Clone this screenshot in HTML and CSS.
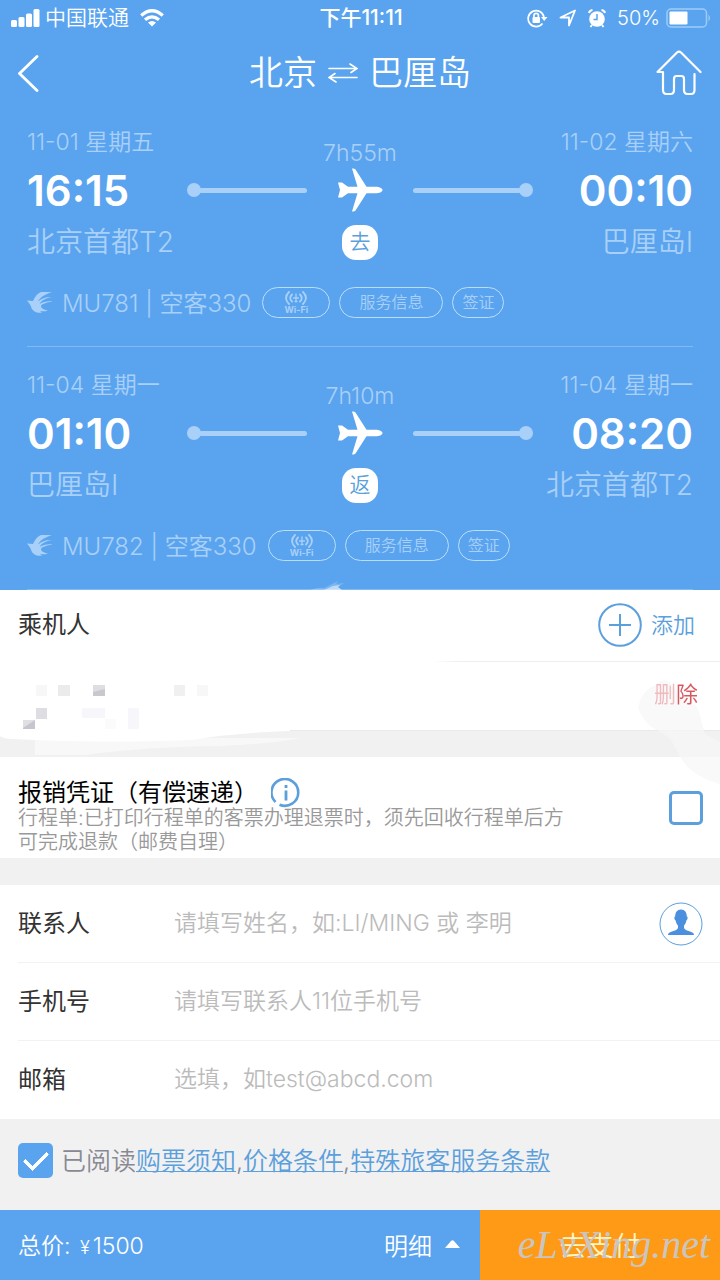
FILE: index.html
```html
<!DOCTYPE html>
<html lang="zh-CN">
<head>
<meta charset="utf-8">
<meta name="viewport" content="width=device-width, initial-scale=1">
<title>北京 ⇄ 巴厘岛</title>
<link rel="stylesheet" href="styles.css">
</head>
<body>
<svg class="symbols" aria-hidden="true">
  <symbol id="plane" viewBox="0 0 46 44"><path d="M45.500 22c0-2-3.500-3.300-7-3.300h-9L18.500 1.500Q17.300.1 15 .6L20.500 18.700H11L5 14.500H1L3 22 1 29.500h4l6-4.200h9.500L15 43.400q2.300.5 3.500-.9L29.500 25.300h9c3.500 0 7-1.300 7-3.300z" fill="#fff"/></symbol>
  <symbol id="swallow" viewBox="0 0 26 22"><path d="M0 9.500l6 .5C8 5 11 2 14 1h11C19 3 13 6 11 10.500 15 7 20 5.500 24.500 6 18 7.500 14 10 12.500 13c4-2.500 8.500-3.300 13-2.500-6 1-11 2.500-11.500 4.500C14 17.500 18 19 21 19.500c-3 1-6 1-8 .5l2 1.700C10 22.500 5 20 4 15.500 3 13 1.500 11.500 0 9.500z" fill="#a9d0f8"/></symbol>
  <symbol id="wifi-plane" viewBox="0 0 26 14"><g fill="none" stroke="#a9d0f8" stroke-width="1.800" stroke-linecap="round"><path d="M6 1Q0 7 6 13M9 3.500Q5.500 7 9 10.500M20 1q6 6 0 12M17 3.500q3.500 3.500 0 7"/><path d="M13 3v7M10.500 7h5M12 10.500h2" stroke-width="1.300"/></g></symbol>
</svg>

<header class="top">
  <div class="status">
    <div class="status-side">
      <svg width="29" height="18" viewBox="0 0 29 18" fill="#fff"><rect x="0" y="11" width="6" height="7" rx="1.500"/><rect x="7.500" y="8" width="6" height="10" rx="1.500"/><rect x="15" y="4.500" width="6" height="13.500" rx="1.500"/><rect x="22.500" y="0" width="6" height="18" rx="1.500"/></svg>
      <span class="carrier">中国联通</span>
      <svg class="wifi" width="24" height="18" viewBox="0 0 24 18" fill="none" stroke="#fff" stroke-width="3.200"><path d="M1.200 6.500Q12-3 22.800 6.500M5 10.800Q12 4.800 19 10.800"/><path d="M8 13.500Q12 10.500 16 13.500L12 17.500z" fill="#fff" stroke="none"/></svg>
    </div>
    <span class="clock">下午11:11</span>
    <div class="status-side status-right">
      <svg width="21" height="19" viewBox="0 0 21 19" fill="none" stroke="#fff" stroke-width="1.700"><path d="M15.500 14.500A8 8 0 1 1 17 8"/><path d="M14 8h6.500L17.200 12z" fill="#fff" stroke="none"/><rect x="5.500" y="8" width="7.500" height="6" rx="1" fill="#fff" stroke="none"/><path d="M7 8V6.500a2.200 2.200 0 0 1 4.400 0V8"/></svg>
      <svg width="18" height="18" viewBox="0 0 18 18" fill="none" stroke="#fff" stroke-width="1.800" stroke-linejoin="round"><path d="M1.500 8.500 16 1.500 10 16.500V8.500z"/></svg>
      <svg width="18" height="19" viewBox="0 0 18 19"><circle cx="9" cy="10" r="7.800" fill="#fff"/><path d="M9 5v5.500H5.500" fill="none" stroke="#5aa4ef" stroke-width="1.500"/><path d="M1 4Q1.500 1.500 4.500 1M17 4Q16.500 1.500 13.500 1M4 16l-1.500 2M14 16l1.500 2" fill="none" stroke="#fff" stroke-width="2"/></svg>
      <span class="charge">50%</span>
      <svg class="battery" width="45" height="20" viewBox="0 0 45 20"><rect x="1" y="1" width="39.500" height="18" rx="4" fill="none" stroke="#9dcbf6" stroke-width="1.500"/><rect x="3.500" y="3.500" width="18" height="13" rx="1" fill="#fff"/><path d="M42.500 6.500q3 3.500 0 7z" fill="#9dcbf6"/></svg>
    </div>
  </div>
  <nav class="navbar">
    <button class="icon-button" aria-label="返回"><svg width="21" height="37" viewBox="0 0 21 37" fill="none" stroke="#fff" stroke-width="2.800" stroke-linecap="round"><path d="M19 1.500 1.500 18.500 19 35.500"/></svg></button>
    <h1 class="route">北京<svg width="30" height="20" viewBox="0 0 30 20" fill="none" stroke="#fff" stroke-width="1.600" stroke-linecap="round"><path d="M1 5.500h28M22 1l7 4.500-6 4M29 14.500H1M8 19l-7-4.500 6-4"/></svg>巴厘岛</h1>
    <button class="icon-button" aria-label="首页"><svg width="46" height="46" viewBox="0 0 46 46" fill="none" stroke="#fff" stroke-width="2.200" stroke-linecap="round" stroke-linejoin="round"><path d="M7 22H1.500L21 2.500q2-2 4 0L44.500 22M7 22v18q0 4 3.500 4h4q3.500 0 3.500-4V29q0-3 2.500-3h5q2.500 0 2.500 3v11q0 4 3.500 4h3.500q3.500 0 3.500-4V24"/></svg></button>
  </nav>
</header>

<main>
  <section class="flight">
    <div class="legs">
      <div class="stop"><span class="date">11-01 星期五</span><strong class="time">16:15</strong><span class="place">北京首都T2</span></div>
      <div class="middle"><span class="duration">7h55m</span>
        <div class="track"><i class="dot"></i><i class="line"></i><svg width="46" height="44"><use href="#plane"/></svg><i class="line"></i><i class="dot"></i></div>
        <div class="direction"><span>去</span></div></div>
      <div class="stop arrive"><span class="date">11-02 星期六</span><strong class="time">00:10</strong><span class="place">巴厘岛I</span></div>
    </div>
    <div class="info">
      <svg width="26" height="22"><use href="#swallow"/></svg><span class="plane-type">MU781 | 空客330</span>
      <button class="chip wifi-chip"><svg width="26" height="14"><use href="#wifi-plane"/></svg><span>Wi-Fi</span></button>
      <button class="chip service">服务信息</button><button class="chip visa">签证</button>
    </div>
  </section>
  <section class="flight">
    <div class="legs">
      <div class="stop"><span class="date">11-04 星期一</span><strong class="time">01:10</strong><span class="place">巴厘岛I</span></div>
      <div class="middle"><span class="duration">7h10m</span>
        <div class="track"><i class="dot"></i><i class="line"></i><svg width="46" height="44"><use href="#plane"/></svg><i class="line"></i><i class="dot"></i></div>
        <div class="direction"><span>返</span></div></div>
      <div class="stop arrive"><span class="date">11-04 星期一</span><strong class="time">08:20</strong><span class="place">北京首都T2</span></div>
    </div>
    <div class="info">
      <svg width="26" height="22"><use href="#swallow"/></svg><span class="plane-type">MU782 | 空客330</span>
      <button class="chip wifi-chip"><svg width="26" height="14"><use href="#wifi-plane"/></svg><span>Wi-Fi</span></button>
      <button class="chip service">服务信息</button><button class="chip visa">签证</button>
    </div>
    <svg class="spray" width="60" height="14" viewBox="0 0 60 14" fill="#fff"><path d="M2 14q8-3 14-2l8-4 6-3-2 3 8-1-6 4 4 3z" opacity=".2"/><path d="M16 14l9-4 7-1-2 2 4 3z" opacity=".5"/></svg>
  </section>

  <section class="card passengers">
    <div class="row passenger-head"><h2 class="label">乘机人</h2>
      <button class="add"><svg width="44" height="44" viewBox="0 0 44 44" fill="none" stroke="#5b9fdc" stroke-width="2"><circle cx="22" cy="22" r="20.800"/><path d="M22 11v22M11 22h22"/></svg>添加</button></div>
    <div class="row passenger-item">
      <svg class="mosaic" width="190" height="50" viewBox="0 0 190 50" aria-hidden="true"><g fill="#dedee2"><path d="M18 2h11v11H18z" opacity=".25"/><path d="M40 2h12v11H40z" opacity=".6"/><path d="M75 2h12v11H75zM18 25h11v11H18z"/><path d="M156 2h11v11h-11z" opacity=".45"/><path d="M179 2h11v11h-11z" opacity=".25"/></g><path d="M75 9l12-3v7H75z" fill="#c8c8cf"/><path d="M5 37h12v11H5z" fill="#c6c6cf"/><path d="M5 37h12L5 45z" fill="#dfdfe4"/><path d="M64 25h23v10H64zM110 25h11v22h-11z" fill="#f6f6fb"/><path d="M87 36h11v11H87z" fill="#fbfbfd"/></svg>
      <button class="delete">删除</button>
    </div>
    <svg class="erased" width="300" height="30" viewBox="0 0 300 30" aria-hidden="true"><path d="M35 9h265q-30 6-80 8-80 1-135 9H35z" fill="#f8f8f8"/><path d="M0 0h290v2q-60 2-98 9-90 4-180-1Q4 10 0 7z" fill="#fff"/></svg>
    <svg class="smudge" width="82" height="112" viewBox="0 0 82 112" aria-hidden="true"><path d="M0 36Q4 18 16 14 28 2 34 14L60 36l7 26 15 8v42Q54 104 44 88L32 66 12 54Q4 46 0 36z" fill="#f7f7f7" opacity=".7"/></svg>
  </section>

  <section class="card voucher">
    <div class="voucher-text">
      <div class="voucher-head"><h2 class="label black"><label for="voucher">报销凭证（有偿速递）</label></h2>
        <button class="icon-button" aria-label="报销凭证说明"><svg width="30" height="30" viewBox="0 0 30 30" fill="none" stroke="#5b9fdc" stroke-width="2.600"><path d="M4.500 24A13.400 13.400 0 1 1 8.500 26.700"/><path d="M15 12.500v10M15 7v3" stroke-width="2.800"/></svg></button></div>
      <p class="note">行程单:已打印行程单的客票办理退票时，须先回收行程单后方<br>可完成退款（邮费自理）</p>
    </div>
    <input class="box" id="voucher" type="checkbox">
  </section>

  <section class="card contact">
    <div class="row field"><label class="label" for="name">联系人</label><input id="name" type="text" placeholder="请填写姓名，如:LI/MING 或 李明">
      <button class="icon-button" aria-label="选择联系人"><svg width="44" height="44" viewBox="0 0 44 44"><circle cx="22" cy="22" r="21" fill="none" stroke="#5b9fdc"/><path d="M22 7.500c4 0 5.800 3 5.800 7 1.500 0 .8 3.500-.5 4-.3 2.500-1.300 4-2.300 5v2.500c1 2 3 2.500 6 3.500 3 1 4 2 4 3.500H9c0-1.500 1-2.500 4-3.500 3-1 5-1.500 6-3.500v-2.500c-1-1-2-2.500-2.300-5-1.300-.5-2-4-.5-4 0-4 1.800-7 5.800-7z" fill="#4b8fdf"/></svg></button></div>
    <div class="row field"><label class="label" for="phone">手机号</label><input id="phone" type="tel" placeholder="请填写联系人11位手机号"></div>
    <div class="row field"><label class="label" for="email">邮箱</label><input id="email" type="email" placeholder="选填，如test@abcd.com"></div>
  </section>

  <div class="terms"><input class="agree" id="agree" type="checkbox" checked><div class="terms-text"><label for="agree">已阅读</label><a href="#">购票须知</a>,<a href="#">价格条件</a>,<a href="#">特殊旅客服务条款</a></div></div>
</main>

<footer class="paybar">
  <div class="total"><span>总价: <small>¥</small><span class="price">1500</span></span><button class="detail">明细<svg width="15" height="8" viewBox="0 0 15 8"><path d="M0 8 6 1q1.500-1.500 3 0l6 7z" fill="#fff"/></svg></button></div>
  <button class="pay">去支付</button>
  <span class="watermark">eLvXing.net</span>
</footer>
</body>
</html>
```
FILE: styles.css
```css
* { box-sizing: border-box; }
body { margin: 0; background: #f1f1f1; color: #333; font-family: Inter, "Noto Sans CJK SC", sans-serif; font-size: 24px; font-weight: 350; }
button, input { font: inherit; color: inherit; margin: 0; padding: 0; border: 0; background: none; }
h1, h2, p { margin: 0; font-weight: inherit; }
svg { display: block; flex: none; }
.symbols { position: absolute; width: 0; height: 0; }

.top, .flight { background: #5aa4ef; color: #fff; }
.status { display: flex; align-items: center; height: 36px; padding: 0 9px 0 11px; font-size: 21px; line-height: 36px; }
.status-side { display: flex; flex: 1; align-items: center; gap: 5px; }
.status-right { justify-content: flex-end; gap: 11px; }
.clock { font-weight: 500; font-size: 21px; }
.wifi { margin-left: 6px; }
.battery { margin-left: -5px; }
.charge { font-size: 20px; }
.navbar { display: flex; align-items: center; justify-content: space-between; height: 68px; padding: 6px 18px 0; }
.navbar .icon-button { display: flex; width: 46px; }
.route { display: flex; align-items: center; gap: 11px; font-size: 34px; line-height: 50px; }

.flight { position: relative; padding: 18px 27px 0; }
.flight::after { content: ""; display: block; height: 1px; background: #82bbf4; }
.legs { display: grid; grid-template-columns: 160px 1fr 160px; color: #a9d0f8; }
.stop, .middle { display: grid; grid-template-rows: 40px 56px 48px; align-items: center; white-space: nowrap; }
.arrive { text-align: right; justify-items: end; }
.date, .duration { font-size: 23px; }
.date { line-height: 42px; }
.time { color: #fff; font-size: 42px; font-weight: 600; }
.place { font-size: 28px; line-height: 50px; }
.duration { align-self: end; justify-self: center; line-height: 18px; }
.track { display: flex; align-items: center; }
.dot { flex: none; width: 14px; height: 14px; border-radius: 50%; background: #a9d0f8; }
.line { flex: 1; height: 5px; border-radius: 3px; background: #a9d0f8; margin: 0 30px 0 -2px; }
.track svg + .line { margin: 0 -2px 0 30px; }
.direction { display: flex; justify-content: center; }
.direction span { width: 36px; height: 35px; border-radius: 14px; background: #fff; color: #5b9fdc; font-size: 21px; line-height: 34px; text-align: center; }
.info { display: flex; align-items: center; height: 80px; padding: 20px 0 28px; color: #a9d0f8; }
.plane-type { margin: -2px 11px 0 9px; white-space: nowrap; }
.chip { height: 31px; margin-right: 9px; border: 1px solid #b9defa; border-radius: 16px; font-size: 16px; line-height: 29px; }
.wifi-chip { display: flex; flex-direction: column; align-items: center; justify-content: center; width: 68px; font-size: 9px; font-weight: 700; line-height: 9px; }
.service { width: 104px; }
.visa { width: 52px; }
.spray { position: absolute; left: 308px; bottom: 0; }

.card { background: #fff; }
.row { display: flex; align-items: center; }
.label { font-size: 24px; font-weight: 400; line-height: 36px; }
.black { color: #000; }
.passengers { position: relative; height: 141px; margin-bottom: 26px; border-bottom: 1px solid #e9e9e9; }
.passenger-head { justify-content: space-between; height: 71px; padding: 0 25px 2px 18px; }
.add { display: flex; align-items: center; gap: 9px; color: #5b9fdc; font-size: 22px; line-height: 40px; }
.passenger-item { justify-content: space-between; height: 69px; padding: 0 22px 0 18px; background: linear-gradient(90deg, transparent 60%, #eee 64%) top / 100% 1px no-repeat; }
.mosaic { align-self: flex-end; margin-bottom: -3px; }
.delete { position: relative; z-index: 1; padding-bottom: 8px; font-size: 22px; background: linear-gradient(90deg, #f0b9bd 50%, #d6575e 54%); -webkit-background-clip: text; background-clip: text; color: transparent; font-weight: 400; }
.erased { position: absolute; left: 0; top: 139px; z-index: 0; }
.smudge { position: absolute; right: 0; top: 82px; pointer-events: none; }

.voucher { display: flex; align-items: center; justify-content: space-between; height: 101px; margin-bottom: 27px; padding: 0 17px 0 18px; }
.voucher-head { display: flex; align-items: center; gap: 13px; height: 30px; margin-top: 16px; }
.note { color: #999; font-size: 20px; line-height: 24px; margin-top: -2px; white-space: nowrap; }
.box { appearance: none; flex: none; width: 34px; height: 34px; border: 3px solid #5b9fdc; border-radius: 5px; background: #fff; }

.contact { padding-left: 18px; }
.field { height: 78px; padding-right: 17px; border-bottom: 1px solid #f2f2f2; }
.field:last-child { border-bottom: 0; }
.field .label { width: 156px; }
.field input { flex: 1; min-width: 0; height: 40px; padding-bottom: 2px; font-size: 23px; outline: 0; }
.field input::placeholder { color: #bbb; opacity: 1; }

.terms { display: flex; align-items: center; gap: 8px; height: 91px; padding: 0 18px 8px; color: #888993; }
.terms-text { margin-top: -4px; font-size: 25px; white-space: nowrap; }
.agree { appearance: none; display: grid; place-items: center; flex: none; width: 35px; height: 35px; border-radius: 5px; background: #5aa4ef; }
.agree::before { content: ""; width: 20px; height: 10px; margin-bottom: 6px; border: solid #fff; border-width: 0 0 4px 4px; border-radius: 2px; transform: rotate(-45deg); }
.terms a { color: #5b9fdc; text-decoration-thickness: 1px; text-underline-offset: 1px; }

.paybar { position: relative; display: flex; height: 70px; color: #fff; }
.total { display: flex; flex: 1; align-items: center; justify-content: space-between; padding: 0 20px 2px 18px; background: #5aa4ef; font-size: 23px; }
.total small { margin-left: 3px; font-size: 18px; }
.price { margin-left: 3px; }
.detail { display: flex; align-items: center; gap: 13px; font-size: 24px; }
.pay { width: 33.333%; padding-bottom: 2px; background: #ff9a17; color: #fff6c8; font-size: 27px; }
.watermark { position: absolute; right: 10px; bottom: 12px; color: #c9c5c0; font: italic 40px/46px "Liberation Serif", serif; pointer-events: none; }
```
